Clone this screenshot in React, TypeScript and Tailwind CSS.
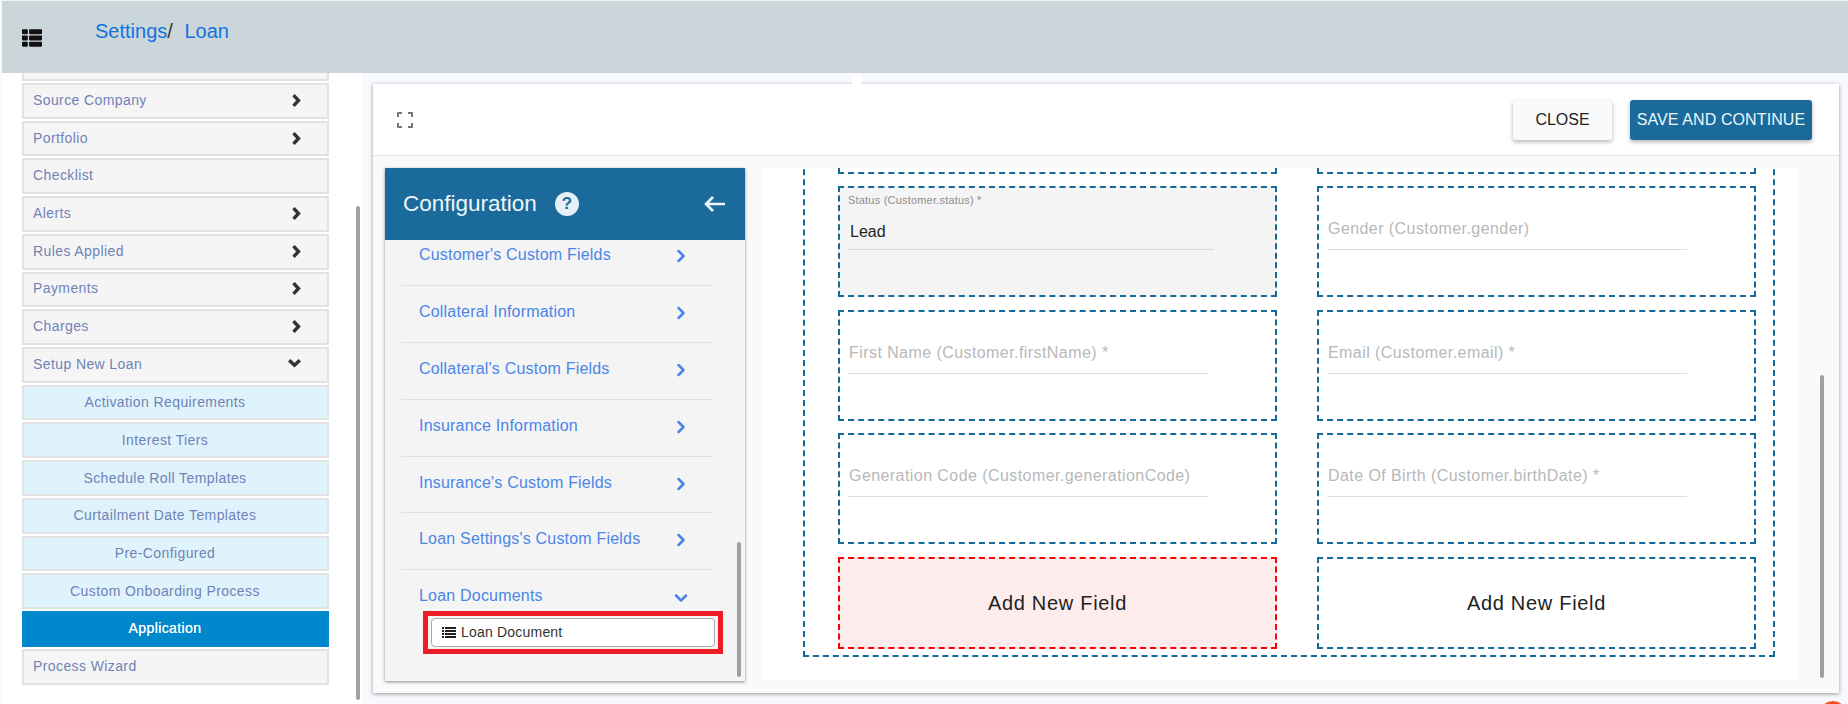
import { FaThList } from "react-icons/fa";
import { ChevronRight, ChevronDown } from "lucide-react";

const MENU_TOP = [
  { label: "Source Company", arrow: "right" },
  { label: "Portfolio", arrow: "right" },
  { label: "Checklist" },
  { label: "Alerts", arrow: "right" },
  { label: "Rules Applied", arrow: "right" },
  { label: "Payments", arrow: "right" },
  { label: "Charges", arrow: "right" },
  { label: "Setup New Loan", arrow: "down" },
];

const SUB_MENU = [
  "Activation Requirements",
  "Interest Tiers",
  "Schedule Roll Templates",
  "Curtailment Date Templates",
  "Pre-Configured",
  "Custom Onboarding Process",
];

const CONFIG_ITEMS = [
  "Customer's Custom Fields",
  "Collateral Information",
  "Collateral's Custom Fields",
  "Insurance Information",
  "Insurance's Custom Fields",
  "Loan Settings's Custom Fields",
];

const ROW = "h-[35.73px] mb-[2px] flex items-center border-2 border-[#e2e2e2] text-[14px] tracking-[0.4px] text-[#7082b5]";
const DASHED = "border-2 border-dashed border-[#146a9c]";

function Sidebar() {
  return (
    <aside className="relative w-[360px] h-full bg-white overflow-hidden shrink-0 pl-[20px]">
      <div className="w-[307px] h-[8px] mb-[2px] bg-[#f5f5f5] border-2 border-t-0 border-[#e2e2e2]" />
      {MENU_TOP.map((item) => (
        <div key={item.label} className={`${ROW} bg-[#f5f5f5] pl-[9px] w-[307px]`}>
          <span className="flex-1 -mt-[1px]">{item.label}</span>
          {item.arrow === "right" && (
            <svg className="mr-[26px] -mt-[1px]" width="10" height="13" viewBox="0 0 10 13" fill="none" stroke="#333" strokeWidth="3.4">
              <path d="M2.5 1.2l5 5.3-5 5.3" />
            </svg>
          )}
          {item.arrow === "down" && (
            <svg className="mr-[26px] -mt-[3px]" width="13" height="10" viewBox="0 0 13 10" fill="none" stroke="#333" strokeWidth="3.4">
              <path d="M1.2 2.2l5.3 5 5.3-5" />
            </svg>
          )}
        </div>
      ))}
      {SUB_MENU.map((label) => (
        <div key={label} className={`${ROW} bg-[#dff3fd] justify-center w-[307px] pr-[21px]`}>
          {label}
        </div>
      ))}
      <div className="h-[35.73px] mb-[2px] w-[307px] pr-[21px] flex items-center justify-center bg-[#0088cc] text-white text-[14px] font-medium tracking-[0.4px] [text-shadow:0_0_0.4px_#fff]">
        Application
      </div>
      <div className={`${ROW} bg-[#f5f5f5] pl-[9px] w-[307px]`}>Process Wizard</div>
      <div className="absolute left-[354px] top-[133px] w-[4px] h-[494px] rounded-sm bg-[#a0a0a0]" />
    </aside>
  );
}

function ConfigPanel() {
  return (
    <div className="relative w-[360px] h-[513px] shrink-0 bg-[#f4f4f5] shadow-[0_1px_3px_rgba(0,0,0,0.45)] overflow-hidden flex flex-col">
      <div className="h-[72px] shrink-0 bg-[#1a6b9c] flex items-center pl-[18px] pr-[19px] text-[#eef5f9] relative z-10">
        <span className="text-[22.5px]">Configuration</span>
        <span className="ml-[18px] w-[24px] h-[24px] rounded-full bg-[#e4f0f6] text-[#1a6b9c] flex items-center justify-center text-[17px] font-bold">?</span>
        <svg className="ml-auto" width="22" height="16" viewBox="0 0 22 16" fill="none" stroke="#eef5f9" strokeWidth="2.6">
          <path d="M21 8H2M9 1L2 8l7 7" />
        </svg>
      </div>
      <div className="-mt-[10.8px] text-[16px] text-[#4a86e8] tracking-[0.2px]">
        {CONFIG_ITEMS.map((label) => (
          <div key={label} className="h-[56.85px] mx-[16px] pl-[18px] border-b border-[#e0e0e0] flex items-center pb-[4px] w-[311px]">
            <span className="flex-1">{label}</span>
            <ChevronRight size={20} strokeWidth={3} className="mr-[21px] mt-[2px]" />
          </div>
        ))}
        <div className="h-[41px] mx-[16px] pl-[18px] flex items-center pt-[10px] w-[311px]">
          <span className="flex-1">Loan Documents</span>
          <ChevronDown size={20} strokeWidth={3} className="mr-[21px] mt-[4px]" />
        </div>
        <div className="ml-[38px] w-[300px] h-[43px] border-[5px] border-[#ed1c24] px-[3px] py-[2px]">
          <div className="h-full bg-white border border-[#aaa] rounded-[4px] flex items-center pl-[10px] text-[14px] text-[#333]">
            <svg className="mr-[5px]" width="14" height="11" viewBox="0 0 14 11" fill="#222">
              <path d="M0 0h2v2H0zM3 0h11v2H3zM0 3h2v2H0zM3 3h11v2H3zM0 6h2v2H0zM3 6h11v2H3zM0 9h2v2H0zM3 9h11v2H3z" />
            </svg>
            Loan Document
          </div>
        </div>
      </div>
      <div className="absolute left-[352px] top-[374px] w-[4px] h-[135px] rounded-sm bg-[#a0a0a0]" />
    </div>
  );
}

function FieldCell({ label, value, wide }: { label: string; value?: string; wide?: boolean }) {
  if (value) {
    return (
      <div className={`h-[111px] ${DASHED} bg-[#f4f4f4] pl-[8px] pt-[5px]`}>
        <div className="text-[11px] leading-[14px] text-[#8d8d8d] tracking-[0.2px]">{label}</div>
        <div className="mt-[10px] h-[33px] w-[366px] border-b border-[#d8d8d8] text-[16px] text-[#222] pl-[2px] pt-[3px]">{value}</div>
      </div>
    );
  }
  return (
    <div className={`h-[111px] ${DASHED} bg-white pl-[8px] pt-[31px]`}>
      <div className={`h-[31px] border-b border-[#dedede] pl-[1px] text-[16px] leading-[20px] text-[#b8b8b8] tracking-[0.43px] ${wide ? "w-[361px]" : "w-[360px]"}`}>
        {label}
      </div>
    </div>
  );
}

function FormPanel() {
  return (
    <div className="w-[1034px] h-[512px] ml-[18px] bg-white overflow-hidden pl-[40px]">
      <div className={`w-[972px] -mt-[59px] h-[548px] ${DASHED} border-t-0 pl-[33px] pr-[18px] grid grid-cols-[439px_439px] gap-x-[40px] gap-y-[12.4px] content-start`}>
        <div className={`h-[115px] -mt-[50px] ${DASHED}`} />
        <div className={`h-[115px] -mt-[50px] ${DASHED}`} />
        <FieldCell label="Status (Customer.status) *" value="Lead" />
        <FieldCell label="Gender (Customer.gender)" />
        <FieldCell label="First Name (Customer.firstName) *" />
        <FieldCell label="Email (Customer.email) *" />
        <FieldCell label="Generation Code (Customer.generationCode)" />
        <FieldCell label="Date Of Birth (Customer.birthDate) *" />
        <div className="h-[92px] border-2 border-dashed border-[#ff0000] bg-[#feecec] flex items-center justify-center text-[20px] tracking-[0.7px] text-[#222]">
          Add New Field
        </div>
        <div className={`h-[92px] ${DASHED} bg-white flex items-center justify-center text-[20px] tracking-[0.7px] text-[#222]`}>
          Add New Field
        </div>
      </div>
    </div>
  );
}

export default function App() {
  return (
    <div className="relative w-[1848px] h-[704px] overflow-hidden bg-[#f8f9fe] font-['Liberation_Sans',sans-serif]">
      <div className="h-[1px] bg-[#f3f3f3]" />
      <header className="h-[72px] ml-[2px] bg-[#cbd6da] flex items-start">
        <FaThList className="ml-[20px] mt-[27px] text-[20px] text-[#111]" />
        <div className="ml-[53px] mt-[18px] text-[20px] leading-[24px] text-[#1273de]">
          Settings<span className="text-[#333]">/</span> <span className="ml-[6px]">Loan</span>
        </div>
      </header>
      <div className="flex h-[631px] ml-[2px]">
        <Sidebar />
        <main className="ml-[11px] mt-[11px] w-[1466px] h-[609px] bg-[#fafafa] shadow-[0_1px_4px_rgba(0,0,0,0.4)] flex flex-col">
          <div className="h-[72px] bg-white border-b border-[#e0e0e0] flex items-center pl-[24px] pr-[27px]">
            <svg width="16" height="16" viewBox="0 0 16 16" fill="none" stroke="#777" strokeWidth="2">
              <path d="M1 5V1h4M11 1h4v4M15 11v4h-4M5 15H1v-4" />
            </svg>
            <button className="ml-auto w-[99px] h-[40px] rounded-[3px] bg-[#fafafa] text-[#222] text-[16px] shadow-[0_2px_4px_rgba(0,0,0,0.3)]">CLOSE</button>
            <button className="ml-[18px] w-[182px] h-[40px] rounded-[3px] bg-[#1a6b9c] text-[#eef5f9] text-[16px] tracking-[0.1px] shadow-[0_2px_4px_rgba(0,0,0,0.3)]">SAVE AND CONTINUE</button>
          </div>
          <div className="flex pl-[12px] pt-[12px]">
            <ConfigPanel />
            <FormPanel />
          </div>
        </main>
      </div>
      <div className="absolute left-[852px] top-[75px] w-[10px] h-[9px] bg-white" />
      <div className="absolute left-[1820px] top-[375px] w-[4px] h-[303px] rounded-sm bg-[#a0a0a0]" />
      <div className="absolute left-[1819px] top-[701px] w-[28px] h-[28px] rounded-full bg-[#f4511e]" />
    </div>
  );
}
